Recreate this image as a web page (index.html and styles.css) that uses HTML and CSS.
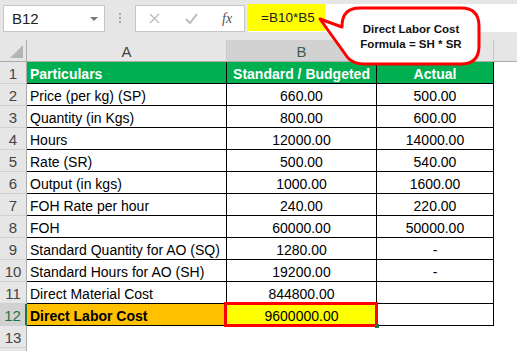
FILE: index.html
```html
<!DOCTYPE html>
<html>
<head>
<meta charset="utf-8">
<link rel="stylesheet" href="styles.css">
</head>
<body>
<div class="topbar">
  <div class="namebox"><span class="nb-text">B12</span><span class="caret"></span></div>
  <div class="dots"><i></i><i></i><i></i></div>
  <div class="fxbox">
    <svg class="ic-x" width="11" height="11" viewBox="0 0 11 11"><path d="M1 1L10 10M10 1L1 10" stroke="#bcbcbc" stroke-width="1.4" fill="none"/></svg>
    <svg class="ic-ok" width="13" height="11" viewBox="0 0 13 11"><path d="M1 6L5 10L12 1" stroke="#bcbcbc" stroke-width="2" fill="none"/></svg>
    <span class="fx">fx</span>
  </div>
  <div class="formula"><span class="hl">=B10*B5</span></div>
</div>

<div class="sheet">
  <div class="ch corner"><span class="tri"></span></div>
  <div class="ch">A</div>
  <div class="ch sel">B</div>
  <div class="ch"></div>
  <div class="ch last"></div>

  <div class="rh">1</div>
  <div class="c g l b">Particulars</div>
  <div class="c g b">Standard / Budgeted</div>
  <div class="c g b">Actual</div>
  <div class="e"></div>

  <div class="rh">2</div><div class="c l">Price (per kg) (SP)</div><div class="c">660.00</div><div class="c">500.00</div><div class="e"></div>
  <div class="rh">3</div><div class="c l">Quantity (in Kgs)</div><div class="c">800.00</div><div class="c">600.00</div><div class="e"></div>
  <div class="rh">4</div><div class="c l">Hours</div><div class="c">12000.00</div><div class="c">14000.00</div><div class="e"></div>
  <div class="rh">5</div><div class="c l">Rate (SR)</div><div class="c">500.00</div><div class="c">540.00</div><div class="e"></div>
  <div class="rh">6</div><div class="c l">Output (in kgs)</div><div class="c">1000.00</div><div class="c">1600.00</div><div class="e"></div>
  <div class="rh">7</div><div class="c l">FOH Rate per hour</div><div class="c">240.00</div><div class="c">220.00</div><div class="e"></div>
  <div class="rh">8</div><div class="c l">FOH</div><div class="c">60000.00</div><div class="c">50000.00</div><div class="e"></div>
  <div class="rh">9</div><div class="c l">Standard Quantity for AO (SQ)</div><div class="c">1280.00</div><div class="c">-</div><div class="e"></div>
  <div class="rh">10</div><div class="c l">Standard Hours for AO (SH)</div><div class="c">19200.00</div><div class="c">-</div><div class="e"></div>
  <div class="rh">11</div><div class="c l">Direct Material Cost</div><div class="c">844800.00</div><div class="c"></div><div class="e"></div>
  <div class="rh rsel">12</div><div class="c l b orange">Direct Labor Cost</div><div class="c yellow active">9600000.00<span class="handle"></span></div><div class="c"></div><div class="e"></div>
  <div class="rh">13</div><div class="e"></div><div class="e"></div><div class="e"></div><div class="e"></div>
  <div class="rh"></div><div class="e"></div><div class="e"></div><div class="e"></div><div class="e"></div>
</div>

<div class="callout">
  <svg class="bubble" width="166" height="62" viewBox="0 0 166 62">
    <path d="M43 3 H144 Q162 3 162 21 V41 Q162 59 144 59 H47 Q37 59 31 53 L3 14 L25 22 V21 Q25 3 43 3 Z" fill="#fff" stroke="#ff0000" stroke-width="3" stroke-linejoin="round"/>
  </svg>
  <div class="ctext">Direct Labor Cost<br>Formula = SH * SR</div>
</div>
</body>
</html>
```

FILE: styles.css
```css
* { box-sizing: border-box; }
html, body {
  margin: 0;
  padding: 0;
  width: 517px;
  height: 351px;
  overflow: hidden;
  background: #fff;
  font-family: "Liberation Sans", Arial, sans-serif;
}

.topbar {
  height: 40px;
  background: #e6e6e6;
  display: flex;
  align-items: flex-start;
}
.namebox {
  margin: 5px 0 0 3px;
  width: 102px;
  height: 27px;
  background: #fff;
  border: 1px solid #c6c6c6;
  display: flex;
  align-items: center;
  justify-content: space-between;
  padding: 0 6px 0 8px;
  font-size: 15px;
  color: #222;
}
.caret {
  width: 0;
  height: 0;
  border-left: 4px solid transparent;
  border-right: 4px solid transparent;
  border-top: 4px solid #777;
}
.dots {
  width: 30px;
  height: 40px;
  display: flex;
  flex-direction: column;
  align-items: center;
  justify-content: center;
  gap: 2px;
  padding-bottom: 4px;
}
.dots i {
  display: block;
  width: 2px;
  height: 2px;
  background: #a6a6a6;
}
.fxbox {
  margin-top: 5px;
  width: 110px;
  height: 27px;
  background: #fff;
  border: 1px solid #c6c6c6;
  display: flex;
  align-items: center;
  padding-left: 13px;
}
.ic-x { margin-right: 25px; }
.ic-ok { margin-right: 24px; }
.fx {
  font-family: "Liberation Serif", serif;
  font-style: italic;
  font-size: 14px;
  color: #555;
}
.formula {
  margin: 4px 0 0 3px;
  flex: 1;
  height: 28px;
  background: #fff;
  display: flex;
}
.hl {
  display: flex;
  align-items: center;
  height: 27px;
  width: 77px;
  background: #ffff00;
  padding-left: 13px;
  font-size: 13.5px;
  color: #222;
}

.sheet {
  display: grid;
  grid-template-columns: 27px 200px 150px 117px 1fr;
  grid-auto-rows: 22px;
}
.ch {
  background: #e6e6e6;
  border-right: 1px solid #c8c8c8;
  border-bottom: 1px solid #ababab;
  font-size: 15px;
  color: #444;
  display: flex;
  align-items: center;
  justify-content: center;
  padding-top: 1px;
}
.ch.sel { background: #d2d2d2; color: #3b5e4b; }
.ch.last { border-right: none; }
.corner { position: relative; border-right-color: #ababab; }
.tri {
  position: absolute;
  right: 3px;
  bottom: 3px;
  width: 0;
  height: 0;
  border-left: 13px solid transparent;
  border-bottom: 13px solid #b4b4b4;
}
.rh {
  background: #e6e6e6;
  border-right: 1px solid #ababab;
  border-bottom: 1px solid #d0d0d0;
  font-size: 15px;
  color: #444;
  display: flex;
  align-items: center;
  justify-content: center;
  padding-top: 1px;
}
.rh.rsel {
  background: #d2d2d2;
  color: #217346;
  border-right: 2px solid #217346;
}
.c {
  border-right: 1px solid #000;
  border-bottom: 1px solid #000;
  font-size: 14px;
  color: #000;
  display: flex;
  align-items: center;
  justify-content: center;
  padding-top: 2px;
  white-space: nowrap;
  position: relative;
}
.c.l { justify-content: flex-start; padding-left: 3px; }
.c.b { font-weight: bold; }
.c.g { background: #00b050; color: #fff; }
.c.orange { background: #ffc000; }
.c.yellow { background: #ffff00; }
.active::after {
  content: "";
  position: absolute;
  left: -3px;
  top: -2px;
  right: -2px;
  bottom: -2px;
  border: 3px solid #ff0000;
}
.handle {
  position: absolute;
  right: -3px;
  bottom: -3px;
  width: 4px;
  height: 4px;
  background: #217346;
  z-index: 2;
}
.e { background: #fff; }

.callout {
  position: absolute;
  left: 317px;
  top: 5px;
  width: 166px;
  height: 62px;
}
.bubble { position: absolute; left: 0; top: 0; }
.ctext {
  position: absolute;
  left: 26px;
  top: 4px;
  width: 136px;
  height: 55px;
  display: flex;
  align-items: center;
  justify-content: center;
  text-align: center;
  font-weight: bold;
  font-size: 11.5px;
  line-height: 15px;
  color: #111;
}
```
